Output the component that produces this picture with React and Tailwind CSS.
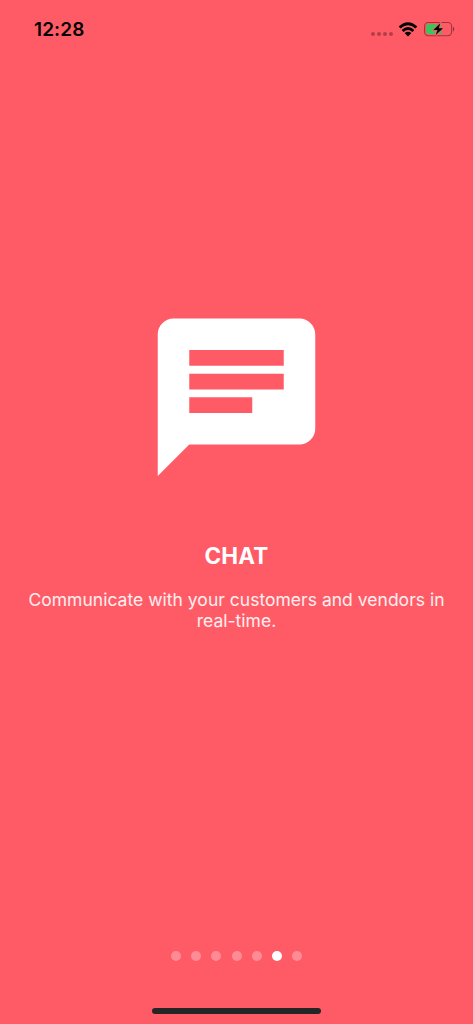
const PAGES = 7;
const ACTIVE = 5;

function StatusBar() {
  return (
    <header className="flex h-[58px] items-center justify-between pl-[34px] pr-[18px] text-black">
      <span className="mt-[2px] text-[19px] leading-6 font-semibold tracking-[0.1px]">12:28</span>
      <div className="flex h-6 items-center">
        <div className="mt-[9px] mr-[5px] flex gap-[2px]">
          {[0, 1, 2, 3].map((i) => (
            <span key={i} className="h-1 w-1 rounded-full bg-black/30" />
          ))}
        </div>
        <svg className="mr-[6px] h-[15px] w-5" viewBox="0 0 20 15" fill="none" stroke="#000" strokeWidth="2.9">
          <path d="M1.6 5.5Q10-2.1 18.4 5.5" />
          <path d="M4.6 9Q10 4.1 15.4 9" />
          <path d="M10 14.5L6.6 11.1Q10 8.5 13.4 11.1Z" fill="#000" stroke="none" />
        </svg>
        <svg className="h-4 w-[31px]" viewBox="0 -0.4 31 16" fill="none">
          <rect x="0.6" y="1.1" width="27" height="13.2" rx="3.6" stroke="#000" strokeOpacity=".4" strokeWidth="1.1" />
          <path d="M29 5.4c1.7.6 1.7 4 0 4.6Z" fill="#000" fillOpacity=".45" />
          <rect x="2.3" y="2.8" width="15.7" height="9.8" rx="2" fill="#34c759" />
          <path d="M16.2 1.9L9.4 8.7h4l-1.6 5L19 6.8H14.9Z" fill="#000" stroke="#ff5b67" strokeWidth="1.8" paintOrder="stroke" />
        </svg>
      </div>
    </header>
  );
}

export default function App() {
  return (
    <div className="flex h-[1024px] w-[473px] flex-col overflow-hidden bg-[#ff5b67] font-['Inter',sans-serif]">
      <StatusBar />
      <main className="flex flex-1 flex-col items-center pt-[244.5px] text-center text-white">
        <svg className="h-[189px] w-[189px] shrink-0" viewBox="0 0.03 24 24" fill="currentColor">
          <path d="M20 2H4c-1.1 0-2 .9-2 2v18l4-4h14c1.1 0 2-.9 2-2V4c0-1.1-.9-2-2-2zM6 9h12v2H6V9zm8 5H6v-2h8v2zm4-6H6V6h12v2z" />
        </svg>
        <h1 className="mt-[50.5px] text-[22.5px] leading-7 font-bold tracking-[0.2px]">CHAT</h1>
        <p className="mt-[18.5px] text-[17.5px] leading-[21px] tracking-[0.02px] text-white/90">
          Communicate with your customers and vendors in
          <br />
          real-time.
        </p>
      </main>
      <footer className="flex flex-col items-center">
        <div className="flex gap-[10.15px]">
          {Array.from({ length: PAGES }, (_, i) => (
            <span key={i} className={i === ACTIVE ? "h-[10px] w-[10px] rounded-full bg-white" : "h-[10px] w-[10px] rounded-full bg-white/30"} />
          ))}
        </div>
        <div className="mt-[46.5px] mb-[10px] h-[6.5px] w-[169px] rounded-full bg-[#252525]" />
      </footer>
    </div>
  );
}
